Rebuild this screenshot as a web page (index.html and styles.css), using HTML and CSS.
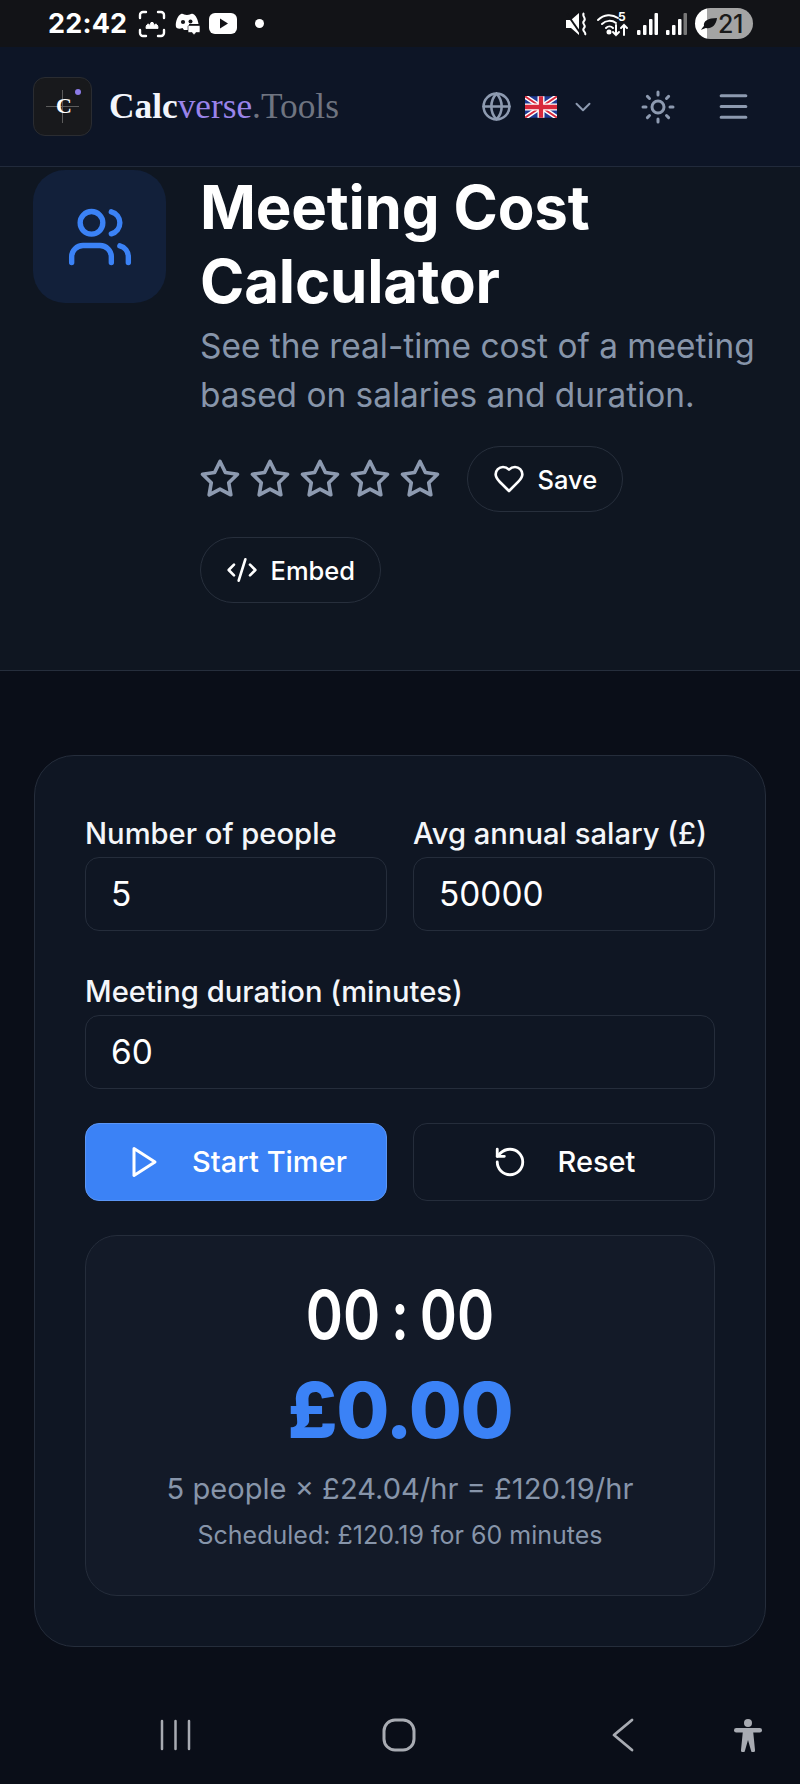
FILE: index.html
```html
<!DOCTYPE html>
<html lang="en">
<head>
<meta charset="utf-8">
<title>Meeting Cost Calculator</title>
<link rel="stylesheet" href="styles.css">
</head>
<body>
<div class="status">
  <div class="status-left">
    <span class="clock">22:42</span>
    <svg width="28" height="28" viewBox="0 0 28 28" fill="none" stroke="#fff" stroke-width="2.400" stroke-linecap="round"><path d="M2 8V5a3 3 0 0 1 3-3h3M20 2h3a3 3 0 0 1 3 3v3M26 20v3a3 3 0 0 1-3 3h-3M8 26H5a3 3 0 0 1-3-3v-3"/><path d="M8 18c0-3 1.500-4 2.500-4l1.500 1.500 1-3h2l1 3 1.500-1.500c1 0 2.500 1 2.500 4z" fill="#fff" stroke-width="1"/></svg>
    <svg width="25" height="22" viewBox="0 0 25 22" fill="#fff"><path d="M6 1c2-1 3 1 6 1s4-2 6-1c3 1 5 6 5.500 10H14v6H9l-1.500-2C5 16 2 16 1 14 0 9 3 2 6 1z"/><circle cx="8" cy="9" r="2.100" fill="#121317"/><circle cx="15.500" cy="8.500" r="2" fill="#121317"/><path d="M14 12.500h10a1 1 0 0 1 1 1v5a1 1 0 0 1-1 1h-3l-2 2.500-2-2.500h-3a1 1 0 0 1-1-1v-5a1 1 0 0 1 1-1z" stroke="#121317" stroke-width=".6"/></svg>
    <svg width="28" height="21" viewBox="0 0 28 21"><rect width="28" height="21" rx="6" fill="#fff"/><path d="M11 5.500l8 5-8 5z" fill="#121317"/></svg>
    <span class="dot"></span>
  </div>
  <div class="status-right">
    <svg width="24" height="26" viewBox="0 0 24 26" fill="#fff"><path d="M1 9h5l8-7v22l-8-7H1z"/><path d="M2 3l14 20" stroke="#121317" stroke-width="2"/><path d="M19 2c-3 3 3 5 0 8s3 4 0 7 3 4 1 7" fill="none" stroke="#fff" stroke-width="2"/></svg>
    <svg class="wifi" width="32" height="28" viewBox="0 0 32 28" fill="none" stroke="#fff" stroke-width="2" stroke-linecap="round"><path d="M1 10c6-6 14-6 20-2M5 14c4-4 10-4 14-1M9 18c2-2 5-2 7 0"/><circle cx="12" cy="22" r="1.500" fill="#fff"/><path d="M19 15v10m-3-3 3 3 3-3M27 25V15m-3 3 3-3 3 3"/><text x="21" y="11" class="wifi5">5</text></svg>
    <svg width="21" height="24" viewBox="0 0 21 24" fill="#fff"><rect y="18" width="3.500" height="5" rx="1"/><rect x="6" y="13" width="3.500" height="10" rx="1"/><rect x="12" y="7" width="3.500" height="16" rx="1"/><rect x="17.500" y="1" width="3.500" height="22" rx="1"/></svg>
    <svg width="21" height="24" viewBox="0 0 21 24" fill="#fff"><rect y="18" width="3.500" height="5" rx="1"/><rect x="6" y="13" width="3.500" height="10" rx="1"/><rect x="12" y="7" width="3.500" height="16" rx="1"/><rect x="17.500" y="1" width="3.500" height="22" rx="1" fill="#777"/></svg>
    <div class="battery">
      <svg width="18" height="14" viewBox="0 0 18 14" fill="#121317"><path d="M1 13c1-2 2-3 3-4C3 4 8 1 17 1c-1 8-6 11-11 10-1 0-3 1-5 2z"/></svg>
      <span>21</span>
    </div>
  </div>
</div>

<header class="topbar">
  <div class="brand">
    <div class="logo">
      <span class="logo-h"></span><span class="logo-v"></span>
      <span class="logo-c">C</span><span class="logo-dot"></span>
    </div>
    <div class="wordmark"><b>Calc</b><span class="verse">verse</span><span class="tools">.Tools</span></div>
  </div>
  <div class="tools-right">
    <svg class="ico-globe" width="31" height="31" viewBox="0 0 24 24" fill="none" stroke="#8d9ab0" stroke-width="2" stroke-linecap="round" stroke-linejoin="round"><circle cx="12" cy="12" r="10"/><path d="M12 2a14.500 14.500 0 0 0 0 20 14.500 14.500 0 0 0 0-20"/><path d="M2 12h20"/></svg>
    <svg class="flag" width="32" height="22" viewBox="0 0 60 40"><rect width="60" height="40" rx="3" fill="#1f3a93"/><path d="M0 0l60 40M60 0L0 40" stroke="#fff" stroke-width="9"/><path d="M0 0l60 40M60 0L0 40" stroke="#d8293b" stroke-width="3.500"/><path d="M30 0v40M0 20h60" stroke="#fff" stroke-width="13"/><path d="M30 0v40M0 20h60" stroke="#d8293b" stroke-width="8"/></svg>
    <svg class="chev" width="26" height="26" viewBox="0 0 24 24" fill="none" stroke="#8d9ab0" stroke-width="1.800" stroke-linecap="round" stroke-linejoin="round"><path d="m6 9 6 6 6-6"/></svg>
    <svg class="sun" width="36" height="36" viewBox="0 0 24 24" fill="none" stroke="#8d9ab0" stroke-width="2" stroke-linecap="round" stroke-linejoin="round"><circle cx="12" cy="12" r="4"/><path d="M12 2v2M12 20v2M4.930 4.930l1.410 1.410M17.660 17.660l1.410 1.410M2 12h2M20 12h2M6.340 17.660l-1.410 1.410M19.070 4.930l-1.410 1.410"/></svg>
    <svg width="37" height="37" viewBox="0 0 24 24" fill="none" stroke="#8d9ab0" stroke-width="2" stroke-linecap="round" stroke-linejoin="round"><path d="M4 5h16M4 12h16M4 19h16"/></svg>
  </div>
</header>

<section class="hero">
  <div class="hero-icon">
    <svg width="68" height="68" viewBox="0 0 24 24" fill="none" stroke="#3b82f6" stroke-width="1.900" stroke-linecap="round" stroke-linejoin="round"><path d="M16 21v-2a4 4 0 0 0-4-4H6a4 4 0 0 0-4 4v2"/><circle cx="9" cy="7" r="4"/><path d="M22 21v-2a4 4 0 0 0-3-3.870"/><path d="M16 3.130a4 4 0 0 1 0 7.750"/></svg>
  </div>
  <div class="hero-body">
    <h1>Meeting Cost Calculator</h1>
    <p class="sub">See the real-time cost of a meeting based on salaries and duration.</p>
    <div class="actions">
      <div class="stars">
        <svg width="42" height="42" viewBox="0 0 24 24"><use href="#star"/></svg>
        <svg width="42" height="42" viewBox="0 0 24 24"><use href="#star"/></svg>
        <svg width="42" height="42" viewBox="0 0 24 24"><use href="#star"/></svg>
        <svg width="42" height="42" viewBox="0 0 24 24"><use href="#star"/></svg>
        <svg width="42" height="42" viewBox="0 0 24 24"><use href="#star"/></svg>
      </div>
      <button class="pill" type="button">
        <svg width="32" height="32" viewBox="0 0 24 24" fill="none" stroke="#fff" stroke-width="2" stroke-linecap="round" stroke-linejoin="round"><path d="M19 14c1.490-1.460 3-3.210 3-5.500A5.500 5.500 0 0 0 16.500 3c-1.760 0-3 .5-4.500 2-1.500-1.500-2.740-2-4.500-2A5.500 5.500 0 0 0 2 8.500c0 2.300 1.500 4.050 3 5.500l7 7Z"/></svg>
        Save
      </button>
      <button class="pill" type="button">
        <svg width="32" height="32" viewBox="0 0 24 24" fill="none" stroke="#fff" stroke-width="2" stroke-linecap="round" stroke-linejoin="round"><path d="m18 16 4-4-4-4"/><path d="m6 8-4 4 4 4"/><path d="m14.500 4-5 16"/></svg>
        Embed
      </button>
    </div>
  </div>
</section>

<main class="main">
  <div class="card">
    <div class="fields">
      <label class="field">
        <span class="label">Number of people</span>
        <span class="input">5</span>
      </label>
      <label class="field">
        <span class="label">Avg annual salary (£)</span>
        <span class="input">50000</span>
      </label>
      <label class="field wide">
        <span class="label">Meeting duration (minutes)</span>
        <span class="input">60</span>
      </label>
    </div>
    <div class="buttons">
      <button class="btn primary" type="button">
        <svg width="36" height="36" viewBox="0 0 24 24" fill="none" stroke="#fff" stroke-width="2" stroke-linecap="round" stroke-linejoin="round"><polygon points="6 3 20 12 6 21 6 3"/></svg>
        Start Timer
      </button>
      <button class="btn" type="button">
        <svg width="34" height="34" viewBox="0 0 24 24" fill="none" stroke="#fff" stroke-width="2" stroke-linecap="round" stroke-linejoin="round"><path d="M3 12a9 9 0 1 0 9-9 9.750 9.750 0 0 0-6.740 2.740L3 8"/><path d="M3 3v5h5"/></svg>
        Reset
      </button>
    </div>
    <div class="result">
      <div class="timer">00<span class="colon">:</span>00</div>
      <div class="cost">£0.00</div>
      <div class="rate">5 people × £24.04/hr = £120.19/hr</div>
      <div class="sched">Scheduled: £120.19 for 60 minutes</div>
    </div>
  </div>
</main>

<nav class="navbar">
  <svg class="nav-a" width="33" height="32" viewBox="0 0 33 32" fill="none" stroke="#a8abb2" stroke-width="2.500" stroke-linecap="round"><path d="M3 2v28M16.500 2v28M30 2v28"/></svg>
  <svg class="nav-b" width="34" height="34" viewBox="0 0 34 34" fill="none" stroke="#a8abb2" stroke-width="3"><rect x="2" y="2" width="30" height="30" rx="11"/></svg>
  <svg class="nav-c" width="24" height="34" viewBox="0 0 24 34" fill="none" stroke="#a8abb2" stroke-width="2.800" stroke-linecap="round" stroke-linejoin="round"><path d="M21 2 3 17l18 15"/></svg>
  <svg width="30" height="34" viewBox="0 0 30 34" fill="#a8abb2"><circle cx="15" cy="5" r="4"/><rect x="1" y="10" width="28" height="4.500" rx="2.250"/><path d="M10 12h10l2 20a2 2 0 0 1-4 .5L15 22l-3 10.500a2 2 0 0 1-4-.5z"/></svg>
</nav>

<svg class="defs" width="0" height="0"><defs><path id="star" fill="none" stroke="#8d9ab0" stroke-width="2.100" stroke-linejoin="round" d="M12 2l3.090 6.260L22 9.270l-5 4.870 1.180 6.880L12 17.770l-6.180 3.250L7 14.140 2 9.270l6.910-1.010z"/></defs></svg>
</body>
</html>
```
FILE: styles.css
```css
* { box-sizing: border-box; }
html, body { margin: 0; padding: 0; }
body {
  width: 800px;
  height: 1784px;
  overflow: hidden;
  display: flex;
  flex-direction: column;
  background: #0a0e18;
  color: #fff;
  font-family: Inter, "Liberation Sans", sans-serif;
}
.status {
  height: 47px;
  flex: none;
  background: #121317;
  display: flex;
  justify-content: space-between;
  align-items: center;
  padding: 0 47px 0 48px;
}
.status-left { display: flex; align-items: center; gap: 9px; }
.clock { font-weight: 700; font-size: 27px; width: 81px; letter-spacing: .2px; }
.dot { width: 9px; height: 9px; border-radius: 50%; background: #fff; margin-left: 9px; }
.status-right { display: flex; align-items: center; gap: 8px; }
.wifi { overflow: visible; }
.wifi5 { font: 700 12px Inter, sans-serif; fill: #fff; stroke: none; }
.battery {
  width: 58px;
  height: 31px;
  border-radius: 16px;
  background: linear-gradient(90deg, #fff 0 12px, #a4a4a4 12px);
  display: flex;
  align-items: center;
  gap: 0;
  padding-left: 5px;
  color: #1a1a1a;
  font-weight: 500;
  font-size: 25px;
  letter-spacing: -.5px;
}
.topbar {
  height: 120px;
  flex: none;
  background: #0d1526;
  border-bottom: 1px solid #212a3b;
  display: flex;
  align-items: center;
  justify-content: space-between;
  padding: 0 48px 0 33px;
}
.brand { display: flex; align-items: center; gap: 17px; }
.logo {
  position: relative;
  width: 59px;
  height: 59px;
  border-radius: 12px;
  background: #18191c;
  border: 1px solid #2a2c31;
}
.logo-h { position: absolute; left: 12px; top: 28px; width: 33px; height: 1px; background: #5c5c5c; }
.logo-v { position: absolute; left: 28px; top: 12px; width: 1px; height: 33px; background: #5c5c5c; }
.logo-c { position: absolute; left: 22px; top: 14px; font: 700 22px/28px "Liberation Serif", serif; }
.logo-dot { position: absolute; left: 41px; top: 11px; width: 6px; height: 6px; border-radius: 50%; background: #8b7ae6; }
.wordmark { font: 400 35.300px "Liberation Serif", serif; }
.wordmark b { color: #f3f5fb; }
.verse { color: #9a84ea; }
.tools { color: #6f7480; }
.tools-right { display: flex; align-items: center; }
.ico-globe { margin-right: 13px; }
.flag { margin-right: 13px; }
.chev { margin-right: 44px; }
.sun { margin-right: 39px; }
.hero {
  height: 504px;
  flex: none;
  background: #0f1621;
  border-bottom: 1px solid #262e3c;
  display: flex;
  gap: 34px;
  padding: 3px 34px 0 33px;
}
.hero-icon {
  width: 133px;
  height: 133px;
  flex: none;
  border-radius: 32px;
  background: #12203a;
  display: flex;
  align-items: center;
  justify-content: center;
}
.hero-body { flex: 1; min-width: 0; }
h1 {
  margin: 0;
  font-size: 60px;
  line-height: 74px;
  font-weight: 700;
  letter-spacing: -.2px;
}
.sub {
  margin: 4px 0 0;
  font-size: 33.400px;
  line-height: 49px;
  color: #8795aa;
}
.actions {
  margin-top: 26px;
  display: flex;
  flex-wrap: wrap;
  align-items: center;
  column-gap: 26px;
  row-gap: 25px;
}
.stars { display: flex; gap: 8px; margin-left: -1px; }
.pill {
  height: 66px;
  padding: 0 24.500px;
  border-radius: 33px;
  border: 1px solid #272f3c;
  background: transparent;
  color: #fff;
  font: 500 25.500px Inter, sans-serif;
  display: flex;
  align-items: center;
  gap: 13px;
}
.main { flex: 1; padding: 84px 34px 0; }
.card {
  height: 892px;
  border: 1px solid #252d3b;
  border-radius: 40px;
  background: #0f1623;
  padding: 55px 50px 0;
}
.fields { display: grid; grid-template-columns: 1fr 1fr; column-gap: 26px; row-gap: 38px; }
.field { display: flex; flex-direction: column; min-width: 0; }
.wide { grid-column: 1 / -1; }
.label { font-size: 29.200px; line-height: 46px; font-weight: 500; color: #f4f6fa; white-space: nowrap; }
.input {
  height: 74px;
  border: 1px solid #252d3b;
  border-radius: 14px;
  padding: 0 25px;
  font-size: 33.400px;
  display: flex;
  align-items: center;
}
.buttons { margin-top: 34px; display: grid; grid-template-columns: 1fr 1fr; column-gap: 26px; }
.btn {
  height: 78px;
  border: 1px solid #252d3b;
  border-radius: 14px;
  background: transparent;
  color: #fff;
  font: 500 29px/34px Inter, sans-serif;
  display: flex;
  align-items: center;
  justify-content: center;
  gap: 31px;
}
.primary { background: #3b82f6; border-color: #5b96f5; }
.result {
  margin-top: 34px;
  height: 361px;
  border: 1px solid #252d3b;
  border-radius: 32px;
  background: #131a28;
  text-align: center;
  padding-top: 36px;
}
.timer { font-size: 68px; line-height: 84px; font-weight: 600; transform: scaleX(.83); }
.colon { padding: 0 13px; }
.cost { margin-top: 9px; font-size: 77px; line-height: 90px; font-weight: 800; color: #3b82f6; letter-spacing: -1.500px; }
.rate { margin-top: 12px; font-size: 29.100px; line-height: 44px; color: #8795aa; }
.sched { margin-top: 4px; font-size: 25px; line-height: 40px; color: #8795aa; }
.navbar {
  height: 94px;
  flex: none;
  display: flex;
  align-items: center;
  padding: 0 0 5px 159px;
}
.nav-a { margin-right: 190px; }
.nav-b { margin-right: 195px; }
.nav-c { margin-right: 98px; }
.defs { position: absolute; }
```
